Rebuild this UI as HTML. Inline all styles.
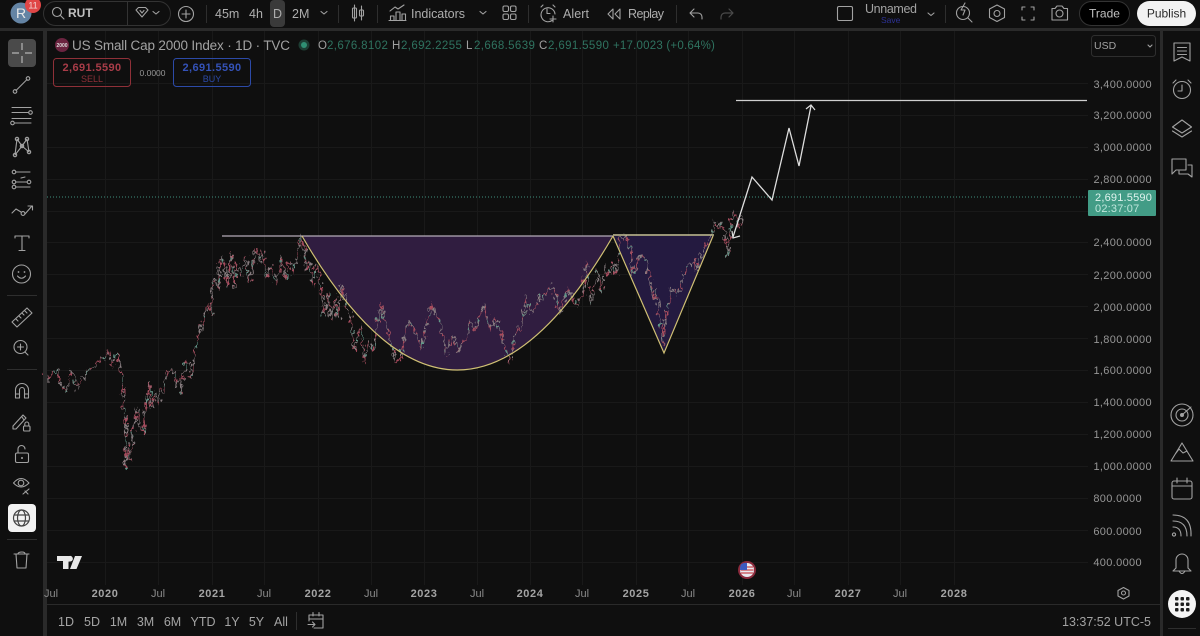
<!DOCTYPE html>
<html><head><meta charset="utf-8"><title>US Small Cap 2000 Index</title>
<style>
html,body{margin:0;padding:0;background:#0f0f0f;width:1200px;height:636px;overflow:hidden}
svg{display:block;font-family:"Liberation Sans",sans-serif;filter:blur(.35px)}
.t{fill:#aeaeae;font-size:12.500px}
.p{fill:#969696;font-size:11px;text-anchor:end;letter-spacing:.35px}
.x{fill:#8a8a8a;font-size:11px;text-anchor:middle}
.y{fill:#a4a4a4;font-size:11px;font-weight:bold;text-anchor:middle;letter-spacing:.6px}
.g{fill:#2f7360;font-size:11.500px;letter-spacing:.15px}
.l{fill:#a0a0a0;font-size:11.500px}
.i{fill:none;stroke:#a2a2a2;stroke-width:1.100;stroke-linecap:round;stroke-linejoin:round}
.c{fill:none;stroke:#a2a2a2;stroke-width:1.100}
.b{fill:#a4a4a4;font-size:12.500px;text-anchor:middle}
</style></head><body>
<svg width="1200" height="636" viewBox="0 0 1200 636" xmlns="http://www.w3.org/2000/svg">
<defs>
<filter id="j" filterUnits="userSpaceOnUse" x="0" y="0" width="1200" height="636" color-interpolation-filters="sRGB">
<feTurbulence type="fractalNoise" baseFrequency=".28 .16" numOctaves="2" seed="4" result="n"/>
<feDisplacementMap in="SourceGraphic" in2="n" scale="11" xChannelSelector="R" yChannelSelector="G"/>
</filter>
<polyline id="pr" fill="none" points="46,382 48,377 50,383 52,376 56,375 60,372 61,378 63,388 66,390 68,393 70,387 73,373 76,378 79,392 82,385 86,378 90,372 94,370 97,371 100,364 103,359 106,362 110,354 113,362 114,367 117,358 120,356 122,366 124,382 125,395 127,420 128,445 128,472 130,450 132,462 135,430 140,410 142,427 145,437 147,412 152,383 153,410 157,395 160,405 165,390 170,372 173,375 177,373 178,387 182,380 183,395 188,363 192,367 194,382 197,355 202,332 207,317 211,305 213,318 214,293 218,280 220,293 223,258 227,268 230,292 233,252 236,290 238,267 243,278 247,258 251,285 258,252 262,263 264,253 269,280 273,268 279,287 283,260 288,282 292,263 295,273 300,257 302,236 307,252 308,273 312,263 315,288 318,267 322,277 326,320 330,295 333,322 337,300 340,320 343,287 348,307 352,317 357,353 363,325 367,363 370,343 375,353 383,305 390,333 397,362 402,362 410,325 418,333 423,350 433,307 443,327 448,355 455,338 460,352 468,340 472,323 477,333 485,308 493,332 497,320 507,350 512,365 517,337 525,323 528,297 533,315 543,300 550,292 555,288 562,315 570,290 578,307 585,298 588,263 593,307 600,273 603,297 607,268 612,278 615,263 618,277 623,240 627,237 633,253 635,277 642,257 648,260 653,290 657,303 658,290 663,327 664,347 668,317 675,290 680,298 688,270 695,263 698,272 707,247 713,237 718,223 722,230 723,223 728,240 730,258 733,223 737,213 740,230 743,217"/>
</defs>
<rect width="1200" height="636" fill="#0f0f0f"/>

<!-- grid -->
<g stroke="#191919" stroke-width="1">
<path d="M47 83.500H1088M47 115.500H1088M47 147.500H1088M47 179.500H1088M47 211.500H1088M47 242.500H1088M47 274.500H1088M47 306.500H1088M47 338.500H1088M47 370.500H1088M47 402.500H1088M47 434.500H1088M47 466.500H1088M47 498.500H1088M47 530.500H1088M47 562.500H1088"/>
<path d="M105.500 31V585M158.500 31V585M212.500 31V585M264.500 31V585M318.500 31V585M371.500 31V585M424.500 31V585M477.500 31V585M530.500 31V585M582.500 31V585M636.500 31V585M688.500 31V585M742.500 31V585M794.500 31V585M848.500 31V585M900.500 31V585M954.500 31V585"/>
</g>

<!-- pattern fills -->
<path d="M302 236Q457 504 613 236Z" fill="#301d40"/>
<path d="M613 236L664 353L713 236Z" fill="#241a40"/>

<!-- price -->
<g filter="url(#j)" transform="translate(-2 -2)">
<use href="#pr" stroke="#8a7f82" stroke-width="1.100"/>
<use href="#pr" stroke="#a84a5c" stroke-width="1.200" stroke-dasharray="7 9"/>
<use href="#pr" stroke="#5e9c8c" stroke-width="1" stroke-dasharray="4 26" stroke-dashoffset="9"/>
</g>

<!-- lines -->
<path d="M222 236H613" stroke="#b4abb8" stroke-width="1.300"/>
<path d="M613 235H714" stroke="#c8c29a" stroke-width="1.500"/>
<path d="M302 236Q457 504 613 236" fill="none" stroke="#d0c074" stroke-width="1.200"/>
<path d="M613 236L664 353L713 236" fill="none" stroke="#d0c074" stroke-width="1.200"/>
<path d="M47 197H1088" stroke="#3f8f7c" stroke-width="1" stroke-dasharray="1 2"/>
<path d="M736 100.500H1087" stroke="#cfcfcf" stroke-width="1.300"/>
<path d="M733 237L752 177L772 200L789 128L799 166L811 106" fill="none" stroke="#dedede" stroke-width="1.300" stroke-linejoin="miter"/>
<path d="M806 109L811 105L815 110M732 231L733 238L740 236" fill="none" stroke="#dedede" stroke-width="1.200"/>

<!-- panel separators -->
<rect x="0" y="28" width="1200" height="3" fill="#2a2a2a"/>
<rect x="43" y="28" width="4" height="608" fill="#2a2a2a"/>
<rect x="1160" y="28" width="3" height="608" fill="#2a2a2a"/>
<rect x="47" y="604" width="1113" height="1" fill="#2a2a2a"/>

<!-- top bar -->
<circle cx="21" cy="13" r="10.500" fill="#6484a4"/>
<text x="21" y="18" fill="#e8e8e8" font-size="14" text-anchor="middle">R</text>
<circle cx="33" cy="5" r="8" fill="#e04646"/>
<text x="33" y="8.500" fill="#f2d6d6" font-size="9" text-anchor="middle">11</text>
<rect x="43.500" y="1.500" width="127" height="24" rx="12" fill="none" stroke="#333"/>
<path d="M127.500 1V26" stroke="#333"/>
<circle cx="57" cy="12" r="4.500" class="c"/><path d="M60.500 15.500L64 19" class="i"/>
<text x="68" y="17" fill="#c0c0c0" font-size="12" font-weight="bold">RUT</text>
<path d="M136 10L138.500 7.500H145.500L148 10L142 17Z" class="i"/><path d="M140 10.500L142 13L144 10.500" class="i"/>
<path d="M153 11.500L156 14L159 11.500" class="i"/>
<circle cx="186" cy="14" r="7.500" class="c"/><path d="M186 10V18M182 14H190" class="i"/>
<path d="M206.500 5V23M338.500 5V23M377.500 5V23M528.500 5V23M676.500 5V23M945.500 5V23" stroke="#2e2e2e"/>
<text x="215" y="18" class="t">45m</text>
<text x="249" y="18" class="t">4h</text>
<rect x="270" y="0" width="15" height="27" rx="4" fill="#3a3a3a"/>
<text x="273" y="18" class="t">D</text>
<text x="292" y="18" class="t">2M</text>
<path d="M321 11.500L324 14L327 11.500" class="i"/>
<path d="M354.500 5V21M361.500 6V20" class="i"/><rect x="352.500" y="8" width="4" height="10" rx="1" class="c"/><rect x="359.500" y="10" width="4" height="6" rx="1" class="c"/>
<path d="M390 11L395 7L398 9L404 5" class="i"/><path d="M390.500 20V16H394V20M396 20V12H400V20M402 20V14H405.500V20M389 20.500H406" class="i"/>
<text x="411" y="18" class="t" textLength="54">Indicators</text>
<path d="M480 11.500L483 14L486 11.500" class="i"/>
<rect x="503" y="6" width="5.500" height="5.500" rx="1.500" class="c"/><rect x="510.500" y="6" width="5.500" height="5.500" rx="1.500" class="c"/><rect x="503" y="14" width="5.500" height="5.500" rx="1.500" class="c"/><rect x="510.500" y="14" width="5.500" height="5.500" rx="1.500" class="c"/>
<path d="M552 20.500A7 7 0 1 1 555 14M547 9V13.500H550M541 7L543 5M553 5L555 7M553 16V22M550 19H556" class="i"/>
<text x="563" y="18" class="t" textLength="26">Alert</text>
<path d="M613 9L608 14L613 19ZM620 9L615 14L620 19Z" class="i"/>
<text x="628" y="18" class="t" textLength="36">Replay</text>
<path d="M690 13H698A4 4 0 0 1 702 17V19M690 13L694 9M690 13L694 17" class="i"/>
<path d="M733 13H725A4 4 0 0 0 721 17V19M733 13L729 9M733 13L729 17" fill="none" stroke="#4a4a4a" stroke-width="1.200" stroke-linecap="round" stroke-linejoin="round"/>
<rect x="837.500" y="6.500" width="15" height="14" rx="1.500" class="c"/>
<text x="865" y="13" fill="#a2a2a2" font-size="12.500" textLength="52">Unnamed</text>
<text x="881" y="23" fill="#2d3296" font-size="8.500">Save</text>
<path d="M928 13L931 15.500L934 13" class="i"/>
<circle cx="963" cy="13" r="6.500" class="c"/><path d="M968 18L972 22M965 3L961 10H965L963 15" class="i"/>
<path d="M997 5L1004.500 9V17.500L997 21.500L989.500 17.500V9Z" class="i"/><circle cx="997" cy="13.500" r="3" class="c"/>
<path d="M1022 10V7H1025M1031 7H1034V10M1034 17V20H1031M1025 20H1022V17" class="i"/>
<path d="M1052 8.500H1055L1057 6H1062L1064 8.500H1067.500V20H1052Z" class="i"/><circle cx="1059.500" cy="13.500" r="3.500" class="c"/>
<rect x="1079.500" y="1.500" width="50" height="24" rx="12" fill="#000" stroke="#333"/>
<text x="1104.500" y="17.500" fill="#c0c0c0" font-size="12" text-anchor="middle">Trade</text>
<rect x="1137" y="1" width="59" height="25" rx="12.500" fill="#f2f2f2"/>
<text x="1166.500" y="17.500" fill="#2a2a2a" font-size="12" text-anchor="middle">Publish</text>

<!-- legend -->
<circle cx="62" cy="45" r="7" fill="#6b2440"/>
<text x="62" y="47" fill="#ddd" font-size="5" font-weight="bold" text-anchor="middle">2000</text>
<text x="72" y="50" fill="#a2a2a2" font-size="13.500" textLength="218">US Small Cap 2000 Index · 1D · TVC</text>
<circle cx="304" cy="45" r="5.500" fill="#1d3d33"/><circle cx="304" cy="45" r="3" fill="#2f8f73"/>
<text x="318" y="49" class="l">O</text><text x="327" y="49" class="g" textLength="61">2,676.8102</text>
<text x="392" y="49" class="l">H</text><text x="401" y="49" class="g" textLength="61">2,692.2255</text>
<text x="466" y="49" class="l">L</text><text x="474" y="49" class="g" textLength="61">2,668.5639</text>
<text x="539" y="49" class="l">C</text><text x="548" y="49" class="g" textLength="61">2,691.5590</text>
<text x="613" y="49" class="g" textLength="102">+17.0023 (+0.64%)</text>

<!-- sell/buy -->
<rect x="53.500" y="58.500" width="77" height="28" rx="3" fill="none" stroke="#8f3038"/>
<text x="92" y="71" fill="#a83c48" font-size="11" font-weight="bold" text-anchor="middle" letter-spacing=".4">2,691.5590</text>
<text x="92" y="82" fill="#8f3038" font-size="9" text-anchor="middle">SELL</text>
<text x="152.500" y="76" fill="#969696" font-size="8.500" text-anchor="middle">0.0000</text>
<rect x="173.500" y="58.500" width="77" height="28" rx="3" fill="none" stroke="#2c4aa8"/>
<text x="212" y="71" fill="#3452b8" font-size="11" font-weight="bold" text-anchor="middle" letter-spacing=".4">2,691.5590</text>
<text x="212" y="82" fill="#2c4aa8" font-size="9" text-anchor="middle">BUY</text>

<!-- USD -->
<rect x="1091.500" y="35.500" width="64" height="21" rx="3" fill="none" stroke="#2e2e2e"/>
<text x="1094" y="49" fill="#a2a2a2" font-size="10.500">USD</text>
<path d="M1148 45L1150 47L1152 45" class="i"/>

<!-- price axis -->
<text x="1152" y="88" class="p">3,400.0000</text>
<text x="1152" y="119" class="p">3,200.0000</text>
<text x="1152" y="151" class="p">3,000.0000</text>
<text x="1152" y="183" class="p">2,800.0000</text>
<text x="1152" y="246" class="p">2,400.0000</text>
<text x="1152" y="279" class="p">2,200.0000</text>
<text x="1152" y="311" class="p">2,000.0000</text>
<text x="1152" y="343" class="p">1,800.0000</text>
<text x="1152" y="374" class="p">1,600.0000</text>
<text x="1152" y="406" class="p">1,400.0000</text>
<text x="1152" y="438" class="p">1,200.0000</text>
<text x="1152" y="470" class="p">1,000.0000</text>
<text x="1142" y="502" class="p">800.0000</text>
<text x="1142" y="535" class="p">600.0000</text>
<text x="1142" y="566" class="p">400.0000</text>
<rect x="1088" y="190" width="68" height="26" rx="1" fill="#429c86"/>
<text x="1095" y="201" fill="#dff3ee" font-size="11" letter-spacing=".2">2,691.5590</text>
<text x="1095" y="212" fill="#bfe6dc" font-size="11" letter-spacing=".2">02:37:07</text>

<!-- time axis -->
<text x="51" y="597" class="x">Jul</text><text x="105" y="597" class="y">2020</text>
<text x="158" y="597" class="x">Jul</text><text x="212" y="597" class="y">2021</text>
<text x="264" y="597" class="x">Jul</text><text x="318" y="597" class="y">2022</text>
<text x="371" y="597" class="x">Jul</text><text x="424" y="597" class="y">2023</text>
<text x="477" y="597" class="x">Jul</text><text x="530" y="597" class="y">2024</text>
<text x="582" y="597" class="x">Jul</text><text x="636" y="597" class="y">2025</text>
<text x="688" y="597" class="x">Jul</text><text x="742" y="597" class="y">2026</text>
<text x="794" y="597" class="x">Jul</text><text x="848" y="597" class="y">2027</text>
<text x="900" y="597" class="x">Jul</text><text x="954" y="597" class="y">2028</text>
<path d="M1123.500 587.500L1129 590.500V596L1123.500 599L1118 596V590.500Z" class="i"/><circle cx="1123.500" cy="593" r="2" class="c"/>

<!-- TV logo -->
<path d="M57 556H68.500V569H63V561H57ZM75 556H82L76.500 569H70ZM69.500 556A2.800 2.800 0 1 1 69.600 561.500A2.800 2.800 0 1 1 69.500 556Z" fill="#e8e8e8"/>

<!-- flag -->
<circle cx="747" cy="570" r="9" fill="#8b2a3c"/>
<circle cx="747" cy="570" r="7" fill="#e8e8ee"/>
<path d="M741 567H753M740.500 570H753.500M741 573H753" stroke="#c8474f" stroke-width="1.300"/>
<path d="M741 564.500A7 7 0 0 1 747 563V570H740Q740 566 741 564.500Z" fill="#3c5ac0"/>

<!-- bottom bar -->
<text x="66" y="626" class="b">1D</text><text x="92" y="626" class="b">5D</text>
<text x="118.500" y="626" class="b">1M</text><text x="145.500" y="626" class="b">3M</text>
<text x="172.500" y="626" class="b">6M</text><text x="203" y="626" class="b">YTD</text>
<text x="232" y="626" class="b">1Y</text><text x="256.500" y="626" class="b">5Y</text>
<text x="281" y="626" class="b">All</text>
<path d="M296.500 612V630" stroke="#2e2e2e"/>
<path d="M309 621V615H323V628H314M313 612.500V616M319 612.500V616M309 619H323M308 624.500H315M312.500 622L315 624.500L312.500 627" class="i"/>
<text x="1151" y="626" fill="#a2a2a2" font-size="12.500" text-anchor="end" textLength="89">13:37:52 UTC-5</text>

<!-- left toolbar -->
<rect x="8" y="39" width="28" height="28" rx="4" fill="#4a4a4a"/>
<path d="M22 43V50M22 56V63M12 53H19M25 53H32" stroke="#b4b4b4" stroke-width="1.200"/>
<path d="M16 90.500L27 79.500" class="i"/><circle cx="15" cy="91.500" r="1.800" class="c"/><circle cx="28" cy="78.500" r="1.800" class="c"/>
<path d="M12 107.500H31M12 112.500H28M12 118.500H31M15 123H31" class="i"/><circle cx="30.500" cy="112.500" r="1.800" class="c"/><circle cx="12.500" cy="123" r="1.800" class="c"/>
<path d="M15 155L17 139L22 146L15 155M22 146L27 139L29 152Z" class="i"/><circle cx="15" cy="155" r="1.700" class="c"/><circle cx="17" cy="139" r="1.700" class="c"/><circle cx="27" cy="139" r="1.700" class="c"/><circle cx="29" cy="152" r="1.700" class="c"/><circle cx="22" cy="146" r="1.700" class="c"/>
<path d="M16 172H30M16 182H27M16 187H30M25 177L21 178" class="i"/><circle cx="14" cy="172" r="1.800" class="c"/><circle cx="14" cy="182" r="1.800" class="c"/><circle cx="14" cy="187" r="1.800" class="c"/><circle cx="29" cy="182" r="1.800" class="c"/>
<path d="M12 213L16 209L21 212M25 214L32 206M28 206H32.500V210" class="i"/><circle cx="23" cy="213.500" r="1.900" class="c"/>
<path d="M15 238V236H29V238M22 236V250M19 250.500H25" class="i"/>
<circle cx="21.500" cy="274" r="9" class="c"/><circle cx="18.500" cy="272" r=".9" fill="#a2a2a2"/><circle cx="24.500" cy="272" r=".9" fill="#a2a2a2"/><path d="M17.500 276Q21.500 280.500 25.500 276" class="i"/>
<path d="M7 295.500H37M7 369.500H37M7 539.500H37" stroke="#2e2e2e"/>
<path d="M12 322L27 308L32 313L17 327Z M16 319L18 321M19 316L21 318M22 313L24 315M25 311L27 313" class="i"/>
<circle cx="20.500" cy="347" r="6.500" class="c"/><path d="M25 352L28 355M20.500 344V350M17.500 347H23.500" class="i"/>
<path d="M15.500 398V390A6.500 6.500 0 0 1 28.500 390V398H24.500V390A2.500 2.500 0 0 0 19.500 390V398ZM15.500 394H19.500M24.500 394H28.500" class="i"/>
<path d="M13 426L23 415L26 418L16 429H13ZM22 417L24 420" class="i"/><rect x="23.500" y="426" width="6.500" height="5" rx="1" class="c"/><path d="M24.800 426V424A2 2 0 0 1 28.800 424V426" class="i"/>
<rect x="15.500" y="453" width="13" height="9.500" rx="1.500" class="c"/><path d="M18 453V449A3.500 3.500 0 0 1 25 449" class="i"/><circle cx="22" cy="458" r="1" fill="#a2a2a2"/>
<path d="M13.500 483Q21 474 29 483Q21 491 13.500 483Z" class="i"/><circle cx="21" cy="483" r="2.800" class="c"/><path d="M23 494L29 489M25 491L28 494" class="i"/>
<rect x="8" y="504" width="28" height="28" rx="4" fill="#f2f2f2"/>
<circle cx="21.500" cy="518" r="8" fill="none" stroke="#444" stroke-width="1.200"/><ellipse cx="21.500" cy="518" rx="4" ry="8" fill="none" stroke="#444" stroke-width="1.200"/><path d="M14.500 515H28.500M14.500 521H28.500" stroke="#444" stroke-width="1.200"/>
<path d="M14 554H29M16 554L17 568H26L27 554M18 554Q18 552 22 552Q25 552 25 554" class="i"/>

<!-- right toolbar -->
<path d="M1174 43H1190V61L1182 57L1174 61ZM1177.500 47.500H1186.500M1177.500 51H1186.500M1177.500 54.500H1186.500" class="i"/>
<circle cx="1182" cy="90" r="8.500" class="c"/><path d="M1182 85V91H1178M1173 83L1176 80M1188 80L1191 83" class="i"/>
<path d="M1182 120L1191.500 127L1182 133L1172.500 127ZM1172.500 131L1182 137L1191.500 131" class="i"/>
<path d="M1172 159H1186V170H1176L1172 174ZM1188 165H1192V177L1188 174H1179V171" class="i"/>
<circle cx="1182" cy="415" r="11" class="c"/><circle cx="1182" cy="415" r="6" class="c"/><circle cx="1182" cy="415" r="2" fill="#a2a2a2"/><path d="M1182 415L1191 407" class="i"/>
<path d="M1171 461L1182 443L1193 461ZM1176 453L1179 449L1183 453L1187 451" class="i"/>
<rect x="1172" y="481" width="20" height="18" rx="2" class="c"/><path d="M1172 486H1192M1177 478V483M1187 478V483" class="i"/>
<circle cx="1174" cy="534.500" r="1.600" class="c"/><path d="M1173 527Q1181 527 1181 536M1173 521Q1187 521 1187 536M1173 515Q1192 515 1191 536" class="i"/>
<path d="M1176 568V560A6 6 0 0 1 1188 560V568L1191 571H1173ZM1179 571Q1182 576 1185 571" class="i"/>
<circle cx="1182" cy="604" r="14" fill="#f4f4f4"/>
<g fill="#1c1c1c"><rect x="1175" y="597" width="3.500" height="3.500" rx="1"/><rect x="1180.500" y="597" width="3.500" height="3.500" rx="1"/><rect x="1186" y="597" width="3.500" height="3.500" rx="1"/><rect x="1175" y="602.500" width="3.500" height="3.500" rx="1"/><rect x="1180.500" y="602.500" width="3.500" height="3.500" rx="1"/><rect x="1186" y="602.500" width="3.500" height="3.500" rx="1"/><rect x="1175" y="608" width="3.500" height="3.500" rx="1"/><rect x="1180.500" y="608" width="3.500" height="3.500" rx="1"/><rect x="1186" y="608" width="3.500" height="3.500" rx="1"/></g>
<path d="M1168 628.500H1196" stroke="#2e2e2e"/>
</svg>
</body></html>
